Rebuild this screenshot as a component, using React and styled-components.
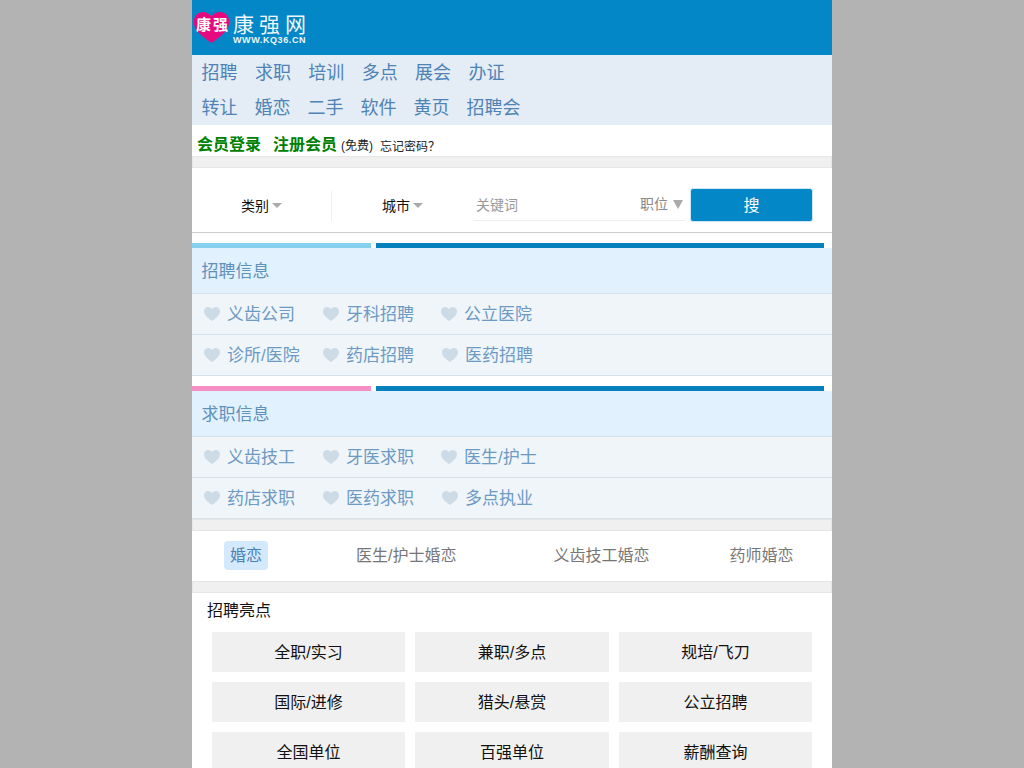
import styled, { createGlobalStyle } from 'styled-components';

const GlobalStyle = createGlobalStyle`
  html, body {
    margin: 0;
    padding: 0;
    height: 100%;
    overflow: hidden;
    background-color: #b3b3b3;
    font-family: "Liberation Sans", "Noto Sans CJK SC", sans-serif;
  }
`;

const NAV_ROWS = [
  { gap: 17.4, items: ['招聘', '求职', '培训', '多点', '展会', '办证'] },
  { gap: 17, items: ['转让', '婚恋', '二手', '软件', '黄页', '招聘会'] },
];

const SECTIONS = [
  {
    title: '招聘信息',
    accent: '#87cfef',
    rows: [
      { second: 118, items: ['义齿公司', '牙科招聘', '公立医院'] },
      { second: 119, items: ['诊所/医院', '药店招聘', '医药招聘'] },
    ],
  },
  {
    title: '求职信息',
    accent: '#f48fc3',
    rows: [
      { second: 118, items: ['义齿技工', '牙医求职', '医生/护士'] },
      { second: 119, items: ['药店求职', '医药求职', '多点执业'] },
    ],
  },
];

const TABS = ['婚恋', '医生/护士婚恋', '义齿技工婚恋', '药师婚恋'];

const HIGHLIGHTS = [
  '全职/实习', '兼职/多点', '规培/飞刀',
  '国际/进修', '猎头/悬赏', '公立招聘',
  '全国单位', '百强单位', '薪酬查询',
];

function Heart({ width = 16, height = 14, color = '#cddbe6' }) {
  return (
    <svg width={width} height={height} viewBox="0 0 16 14" fill={color}>
      <path d="M8 14C3 10.500 0 8 0 4.300 0 1.800 1.900 0 4.200 0 5.800 0 7.200 .8 8 2 8.800 .8 10.200 0 11.800 0 14.100 0 16 1.800 16 4.300 16 8 13 10.500 8 14Z" />
    </svg>
  );
}

function App() {
  return (
    <>
      <GlobalStyle />
      <Page>
        <Header>
          <LogoMark>
            <Heart width={37} height={31} color="#e6097f" />
            <LogoMarkText>康强</LogoMarkText>
          </LogoMark>
          <LogoText>
            <LogoName>康强网</LogoName>
            <LogoUrl>WWW.KQ36.CN</LogoUrl>
          </LogoText>
        </Header>

        <Nav>
          {NAV_ROWS.map((row) => (
            <NavRow key={row.items[0]} $gap={row.gap}>
              {row.items.map((item) => <NavLink key={item}>{item}</NavLink>)}
            </NavRow>
          ))}
        </Nav>

        <LoginBar>
          <LoginLink>会员登录</LoginLink>
          <LoginLink>注册会员</LoginLink>
          <Free>(免费)</Free>
          <Forgot>忘记密码？</Forgot>
        </LoginBar>
        <Band />

        <SearchBar>
          <SelectBox $width={140} $divider>类别<Caret /></SelectBox>
          <SelectBox $width={141}>城市<Caret /></SelectBox>
          <KeywordBox>
            <Keyword>关键词</Keyword>
            <KeywordType>职位<TypeCaret /></KeywordType>
          </KeywordBox>
          <SearchButton>搜</SearchButton>
        </SearchBar>

        {SECTIONS.map((section) => (
          <Section key={section.title}>
            <Bars>
              <ShortBar $color={section.accent} />
              <LongBar />
            </Bars>
            <SectionTitle>{section.title}</SectionTitle>
            {section.rows.map((row) => (
              <LinkRow key={row.items[0]} $second={row.second}>
                {row.items.map((label) => (
                  <LinkItem key={label}>
                    <Heart />
                    <LinkLabel>{label}</LinkLabel>
                  </LinkItem>
                ))}
              </LinkRow>
            ))}
          </Section>
        ))}

        <Band />
        <Tabs>
          {TABS.map((tab, i) => <Tab key={tab} $active={i === 0}>{tab}</Tab>)}
        </Tabs>
        <Band />

        <HighlightTitle>招聘亮点</HighlightTitle>
        <HighlightGrid>
          {HIGHLIGHTS.map((item) => <HighlightCell key={item}>{item}</HighlightCell>)}
        </HighlightGrid>
      </Page>
    </>
  );
}

const Page = styled.div`
  width: 640px;
  margin: 0 auto;
  background-color: #fff;
`;

const Header = styled.header`
  display: flex;
  align-items: flex-start;
  height: 55px;
  padding: 11px 0 0 1px;
  box-sizing: border-box;
  background-color: #0487c6;
`;

const LogoMark = styled.div`
  position: relative;
  width: 37px;
  height: 31px;
  margin: 1px 3px 0 0;
`;

const LogoMarkText = styled.span`
  position: absolute;
  top: 3px;
  left: 3px;
  font-family: "Noto Sans CJK SC", sans-serif;
  font-size: 15px;
  line-height: 18px;
  font-weight: 700;
  letter-spacing: 2px;
  color: #fff;
  white-space: nowrap;
`;

const LogoText = styled.div`
  display: flex;
  flex-direction: column;
  color: #eef6fb;
`;

const LogoName = styled.span`
  font-family: "Noto Sans CJK SC", sans-serif;
  font-size: 21px;
  line-height: 24px;
  letter-spacing: 5px;
`;

const LogoUrl = styled.span`
  font-size: 9px;
  line-height: 10px;
  font-weight: 700;
  letter-spacing: .6px;
`;

const Nav = styled.nav`
  height: 70px;
  padding-left: 9.5px;
  background-color: #e4ecf6;
`;

const NavRow = styled.div`
  display: flex;
  gap: ${(p) => p.$gap}px;
  height: 35px;
  box-sizing: border-box;
  padding-bottom: 4px;
  align-items: center;
`;

const NavLink = styled.a`
  font-size: 18px;
  color: #4f83b5;
`;

const LoginBar = styled.div`
  display: flex;
  align-items: flex-end;
  height: 31px;
  padding-left: 5px;
  box-sizing: border-box;
`;

const LoginLink = styled.a`
  margin-right: 12px;
  font-size: 16px;
  line-height: 22px;
  font-weight: 700;
  color: #008000;
  &:nth-of-type(2) {
    margin-right: 4px;
  }
`;

const Free = styled.span`
  margin-right: 7px;
  font-size: 12px;
  line-height: 20px;
  color: #222;
`;

const Forgot = styled.span`
  font-family: "Noto Sans CJK SC", sans-serif;
  font-size: 12px;
  line-height: 20px;
  color: #222;
  text-spacing-trim: space-all;
`;

const Band = styled.div`
  height: 12px;
  box-sizing: border-box;
  border: 1px solid #e6e6e6;
  background-color: #f0f0f0;
`;

const SearchBar = styled.div`
  display: flex;
  align-items: center;
  height: 65px;
  padding-top: 8px;
  box-sizing: border-box;
  border-bottom: 1px solid #ccc;
`;

const SelectBox = styled.div`
  display: flex;
  justify-content: center;
  align-items: center;
  width: ${(p) => p.$width}px;
  height: 30px;
  margin-top: 4px;
  padding-bottom: 2px;
  font-size: 14px;
  box-sizing: border-box;
  color: #111;
  border-right: ${(p) => (p.$divider ? '1px solid #eee' : 'none')};
`;

const Caret = styled.span`
  width: 0;
  height: 0;
  margin-left: 3px;
  border-left: 5px solid transparent;
  border-right: 5px solid transparent;
  border-top: 5px solid #aaa;
`;

const KeywordBox = styled.div`
  display: flex;
  justify-content: space-between;
  align-items: center;
  width: 211px;
  height: 30px;
  margin: 4px 0 0 1px;
  padding: 0 2px;
  box-sizing: border-box;
  border-bottom: 1px solid #eee;
`;

const Keyword = styled.span`
  margin-bottom: 4px;
  font-size: 14px;
  color: #999;
`;

const KeywordType = styled.span`
  display: flex;
  align-items: center;
  margin-bottom: 5px;
  font-size: 14px;
  color: #888;
`;

const TypeCaret = styled.span`
  width: 0;
  height: 0;
  margin: 2px 0 0 5px;
  border-left: 5px solid transparent;
  border-right: 5px solid transparent;
  border-top: 9px solid #aaa;
`;

const SearchButton = styled.button`
  width: 123px;
  height: 34px;
  margin: 2px 0 0 5px;
  padding: 0 0 2px;
  box-sizing: border-box;
  border: 1px solid #cfe6f5;
  border-radius: 3px;
  background-color: #0487c6;
  color: #fff;
  font-family: inherit;
  font-size: 16px;
`;

const Section = styled.section`
  padding-top: 10px;
`;

const Bars = styled.div`
  display: flex;
  gap: 5px;
  height: 5px;
`;

const ShortBar = styled.div`
  width: 179px;
  background-color: ${(p) => p.$color};
`;

const LongBar = styled.div`
  width: 448px;
  background-color: #0580bc;
`;

const SectionTitle = styled.div`
  height: 46px;
  padding-left: 9.5px;
  box-sizing: border-box;
  border-bottom: 1px solid #d5e2ec;
  background-color: #e1f1fe;
  font-size: 17px;
  line-height: 47px;
  color: #5f91bb;
`;

const LinkRow = styled.div`
  display: grid;
  grid-template-columns: 119px ${(p) => p.$second}px auto;
  align-items: center;
  height: 41px;
  padding-left: 12px;
  box-sizing: border-box;
  border-bottom: 1px solid #d8e2ea;
  background-color: #f0f5fa;
`;

const LinkItem = styled.a`
  display: flex;
  align-items: center;
  gap: 7px;
`;

const LinkLabel = styled.span`
  padding-bottom: 4px;
  font-size: 17px;
  color: #6c9ac3;
`;

const Tabs = styled.div`
  display: flex;
  align-items: center;
  height: 50px;
  padding: 0 0 1px 32px;
  box-sizing: border-box;
`;

const Tab = styled.a`
  padding: 5px 6px;
  border-radius: 4px;
  font-size: 16px;
  line-height: 19px;
  color: ${(p) => (p.$active ? '#4a80b4' : '#777')};
  background-color: ${(p) => (p.$active ? '#d4e9fb' : 'transparent')};
  &:nth-child(1) { margin-right: 82px; }
  &:nth-child(2) { margin-right: 85px; }
  &:nth-child(3) { margin-right: 68px; }
`;

const HighlightTitle = styled.div`
  padding: 7px 0 0 15px;
  font-size: 16px;
  line-height: 22px;
  color: #111;
`;

const HighlightGrid = styled.div`
  display: grid;
  grid-template-columns: 193px 194px 193px;
  grid-auto-rows: 40px;
  gap: 10px;
  padding: 10px 20px 0;
`;

const HighlightCell = styled.a`
  display: flex;
  justify-content: center;
  align-items: center;
  padding-bottom: 2px;
  box-sizing: border-box;
  background-color: #f0f0f0;
  font-size: 16px;
  color: #111;
`;

export default App;
